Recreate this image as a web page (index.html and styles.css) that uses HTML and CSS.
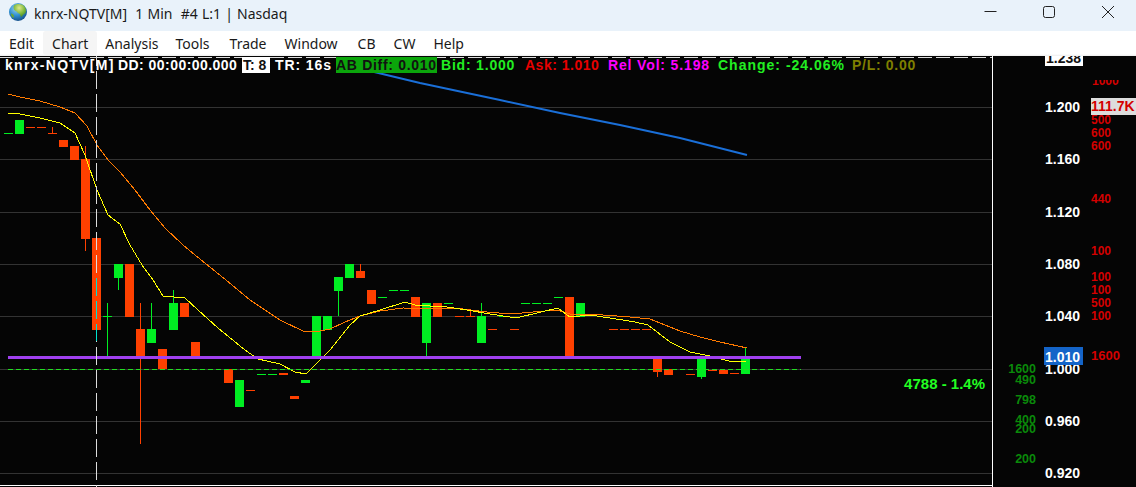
FILE: index.html
```html
<!DOCTYPE html>
<html lang="en">
<head>
    <meta charset="UTF-8">
    <meta name="viewport" content="width=device-width, initial-scale=1.0">
    <title>knrx-NQTV[M]</title>
    <link rel="stylesheet" href="styles.css">
</head>
<body>
    <div class="titlebar">
        <svg class="globe" width="18" height="18" viewBox="0 0 18 18">
            <defs>
                <radialGradient id="sea" cx="40%" cy="30%" r="80%">
                    <stop offset="0" stop-color="#9fd4ee"/>
                    <stop offset="0.5" stop-color="#2f8fd0"/>
                    <stop offset="1" stop-color="#0f3f78"/>
                </radialGradient>
                <radialGradient id="land" cx="45%" cy="30%" r="75%">
                    <stop offset="0" stop-color="#dfe88a"/>
                    <stop offset="0.6" stop-color="#7cb83a"/>
                    <stop offset="1" stop-color="#3f7f2a"/>
                </radialGradient>
            </defs>
            <circle cx="9" cy="9" r="9" fill="url(#sea)"/>
            <path d="M5 2.500C8 .5 13 .5 15.500 3.500 17.500 6 17.500 9.500 15.500 11c-1.500.5-2 2.500-3.500 3-1-1.500-.5-3-2-3.500-2-.5-1.500-2-3.500-2.500C4.500 7 4 4 5 2.500z" fill="url(#land)"/>
            <path d="M2 10.500c1.500 0 2.500 1 3 2.500l-.5 2C3 14 2 12.500 2 10.500z" fill="#6aa636"/>
        </svg>
        <span class="title">knrx-NQTV[M]  1 Min  #4 L:1 | Nasdaq</span>
        <div class="winbtns">
            <svg width="14" height="14" viewBox="0 0 14 14"><path d="M1.500 6.500H13.500" stroke="#222" fill="none"/></svg>
            <svg width="14" height="14" viewBox="0 0 14 14"><rect x="1.500" y="1.500" width="11" height="11" rx="2" stroke="#222" fill="none"/></svg>
            <svg width="14" height="14" viewBox="0 0 14 14"><path d="M1 1L13 13M13 1L1 13" stroke="#222" fill="none"/></svg>
        </div>
    </div>
    <div class="menubar">
        <span class="menu-item">Edit</span>
        <span class="menu-item active">Chart</span>
        <span class="menu-item">Analysis</span>
        <span class="menu-item">Tools</span>
        <span class="menu-item">Trade</span>
        <span class="menu-item">Window</span>
        <span class="menu-item">CB</span>
        <span class="menu-item">CW</span>
        <span class="menu-item">Help</span>
    </div>
    <div class="chart">
        <svg class="plot" width="1136" height="431" viewBox="0 56 1136 431">
            <!-- grid -->
            <g class="grid">
                <rect x="0" y="107" width="992" height="1"/>
                <rect x="0" y="159" width="992" height="1"/>
                <rect x="0" y="212" width="992" height="1"/>
                <rect x="0" y="264" width="992" height="1"/>
                <rect x="0" y="316" width="992" height="1"/>
                <rect x="0" y="369" width="992" height="1"/>
                <rect x="0" y="421" width="992" height="1"/>
                <rect x="0" y="473" width="992" height="1"/>
            </g>
            <line class="topdash" x1="0" y1="57.500" x2="992" y2="57.500"/>
            <rect class="frame" x="992" y="56" width="1" height="431"/>
            <rect class="frame" x="0" y="485" width="992" height="1"/>

            <!-- green candles -->
            <g class="up">
                <rect x="4" y="133" width="9" height="1"/>
                <rect x="15" y="120" width="9" height="14"/>
                <rect x="107" y="303" width="1" height="53"/>
                <rect x="103" y="316" width="9" height="1"/>
                <rect x="114" y="264" width="9" height="14"/>
                <rect x="118" y="278" width="1" height="12"/>
                <rect x="147" y="329" width="9" height="14"/>
                <rect x="151" y="303" width="1" height="26"/>
                <rect x="169" y="303" width="9" height="27"/>
                <rect x="173" y="290" width="1" height="13"/>
                <rect x="235" y="380" width="9" height="27"/>
                <rect x="257" y="374" width="9" height="1"/>
                <rect x="268" y="374" width="9" height="1"/>
                <rect x="301" y="380" width="9" height="3"/>
                <rect x="312" y="316" width="9" height="40"/>
                <rect x="323" y="316" width="9" height="14"/>
                <rect x="334" y="277" width="9" height="14"/>
                <rect x="338" y="291" width="1" height="25"/>
                <rect x="345" y="264" width="9" height="14"/>
                <rect x="378" y="297" width="9" height="1"/>
                <rect x="389" y="290" width="9" height="1"/>
                <rect x="400" y="290" width="9" height="1"/>
                <rect x="422" y="303" width="9" height="40"/>
                <rect x="426" y="343" width="1" height="13"/>
                <rect x="444" y="303" width="9" height="1"/>
                <rect x="477" y="316" width="9" height="27"/>
                <rect x="481" y="303" width="1" height="13"/>
                <rect x="499" y="316" width="9" height="1"/>
                <rect x="521" y="303" width="9" height="1"/>
                <rect x="532" y="303" width="9" height="1"/>
                <rect x="543" y="303" width="9" height="1"/>
                <rect x="554" y="297" width="9" height="1"/>
                <rect x="576" y="303" width="9" height="14"/>
                <rect x="697" y="358" width="9" height="19"/>
                <rect x="701" y="377" width="1" height="2"/>
                <rect x="741" y="358" width="9" height="16"/>
                <rect x="745" y="348" width="1" height="10"/>
            </g>

            <!-- red candles -->
            <g class="down">
                <rect x="26" y="127" width="9" height="1"/>
                <rect x="37" y="127" width="9" height="1"/>
                <rect x="48" y="133" width="9" height="1"/>
                <rect x="52" y="127" width="1" height="6"/>
                <rect x="59" y="140" width="9" height="7"/>
                <rect x="70" y="146" width="9" height="14"/>
                <rect x="81" y="159" width="9" height="80"/>
                <rect x="85" y="146" width="1" height="13"/>
                <rect x="85" y="239" width="1" height="12"/>
                <rect x="92" y="238" width="9" height="92"/>
                <rect x="125" y="264" width="9" height="53"/>
                <rect x="136" y="329" width="9" height="27"/>
                <rect x="140" y="303" width="1" height="141"/>
                <rect x="158" y="349" width="9" height="20"/>
                <rect x="180" y="303" width="9" height="14"/>
                <rect x="191" y="342" width="9" height="14"/>
                <rect x="224" y="369" width="9" height="14"/>
                <rect x="246" y="390" width="9" height="1"/>
                <rect x="279" y="373" width="9" height="2"/>
                <rect x="290" y="396" width="9" height="3"/>
                <rect x="356" y="271" width="9" height="7"/>
                <rect x="360" y="264" width="1" height="7"/>
                <rect x="367" y="290" width="9" height="14"/>
                <rect x="411" y="297" width="9" height="20"/>
                <rect x="433" y="303" width="9" height="14"/>
                <rect x="455" y="316" width="9" height="1"/>
                <rect x="466" y="316" width="9" height="1"/>
                <rect x="470" y="310" width="1" height="6"/>
                <rect x="488" y="329" width="9" height="1"/>
                <rect x="510" y="329" width="9" height="1"/>
                <rect x="565" y="297" width="9" height="59"/>
                <rect x="609" y="329" width="9" height="1"/>
                <rect x="620" y="329" width="9" height="1"/>
                <rect x="631" y="329" width="9" height="1"/>
                <rect x="642" y="329" width="9" height="1"/>
                <rect x="653" y="358" width="9" height="14"/>
                <rect x="657" y="372" width="1" height="5"/>
                <rect x="664" y="369" width="9" height="6"/>
                <rect x="686" y="374" width="9" height="1"/>
                <rect x="708" y="370" width="9" height="1"/>
                <rect x="719" y="370" width="9" height="4"/>
                <rect x="730" y="373" width="9" height="1"/>
            </g>

            <!-- moving averages -->
            <polyline class="ma-blue" points="370,71 420,83 500,100 560,113 620,125 680,138 747,155"/>
            <polyline class="ma-orange" points="8,94 20,97 40,101 60,107 75,113 87,126 97,145 108,160 120,172 135,190 150,210 165,228 183,245 195,255 226,280 250,300 280,320 305,332 320,331 330,329 345,322 360,316 380,311 403,308 463,309 487,312 510,314 557,310 570,314 590,314 630,317 650,319 680,331 700,337 720,342 747,348"/>
            <polyline class="ma-yellow" points="8,113 20,114 40,118 60,123 75,133 85,155 97,190 108,215 120,224 130,245 142,265 153,280 163,296 185,298 198,310 218,328 245,350 258,359 280,364 295,372 306,374 320,360 330,350 350,325 360,316 380,310 405,302 415,305 430,306 447,307 467,310 490,314 510,317 516,318 537,313 558,308 570,317 590,315 610,318 635,322 648,325 670,342 690,352 710,356 733,362 746,361"/>

            <line class="price-dash" x1="8" y1="369.500" x2="801" y2="369.500"/>
            <rect class="price-line" x="8" y="356" width="793" height="3"/>
            <line class="cursor" x1="96.500" y1="48" x2="96.500" y2="487"/>
            <line class="cursor-in" x1="96.500" y1="278" x2="96.500" y2="341"/>

            <!-- price axis -->
            <rect class="tag-white" x="1045" y="56" width="38" height="10"/>
            <text class="tag-text" x="1046" y="63">1.238</text>
            <g class="price">
                <text x="1045" y="112">1.200</text>
                <text x="1045" y="164">1.160</text>
                <text x="1045" y="217">1.120</text>
                <text x="1045" y="269">1.080</text>
                <text x="1045" y="321">1.040</text>
                <text x="1045" y="374">1.000</text>
                <text x="1045" y="426">0.960</text>
                <text x="1045" y="478">0.920</text>
            </g>
            <rect class="tag-blue" x="1044" y="347" width="39" height="18"/>
            <text class="tag-blue-text" x="1045" y="362">1.010</text>

            <g class="vol-red">
                <text x="1092" y="85">1000</text>
                <rect class="mask" x="1090" y="66" width="40" height="14"/>
                <text x="1091" y="124">500</text>
                <rect class="tag-grey" x="1091" y="98" width="45" height="17"/>
                <text class="big" x="1091" y="111">111.7K</text>
                <text x="1091" y="137">600</text>
                <text x="1091" y="150">600</text>
                <text x="1091" y="203">440</text>
                <text x="1091" y="255">100</text>
                <text x="1091" y="281">100</text>
                <text x="1091" y="294">100</text>
                <text x="1091" y="307">500</text>
                <text x="1091" y="320">100</text>
                <text class="big-thin" x="1091" y="360">1600</text>
            </g>
            <g class="vol-green">
                <text x="1036" y="373">1600</text>
                <text x="1036" y="384">490</text>
                <text x="1036" y="404">798</text>
                <text x="1036" y="424">400</text>
                <text x="1036" y="433">200</text>
                <text x="1036" y="463">200</text>
            </g>
            <text class="summary" x="985" y="389">4788 - 1.4%</text>
        </svg>

        <div class="status">
            <span class="st st-name">knrx-NQTV[M]</span>
            <span class="st st-dd">DD: 00:00:00.000</span>
            <span class="st st-t">T: 8</span>
            <span class="st st-tr">TR: 16s</span>
            <span class="st st-ab">AB Diff: 0.010</span>
            <span class="st st-bid">Bid: 1.000</span>
            <span class="st st-ask">Ask: 1.010</span>
            <span class="st st-rel">Rel Vol: 5.198</span>
            <span class="st st-chg">Change: -24.06%</span>
            <span class="st st-pl">P/L: 0.00</span>
        </div>
    </div>
</body>
</html>
```

FILE: styles.css
```css
body {
    margin: 0;
    width: 1136px;
    height: 487px;
    overflow: hidden;
    background: #050505;
    font-family: "Noto Sans", sans-serif;
}
.titlebar {
    height: 31px;
    background: #e9f2fa;
    display: flex;
    align-items: center;
    padding-left: 9px;
    color: #1a1a1a;
    font-size: 14px;
}
.globe {
    margin-right: 7px;
    margin-bottom: 7px;
}
.title {
    white-space: pre;
    word-spacing: 0.5px;
    margin-bottom: 4px;
}
.winbtns {
    margin-left: auto;
    margin-right: 21px;
    margin-bottom: 7px;
    display: flex;
    gap: 45px;
    height: 14px;
}
.menubar {
    height: 25px;
    background: linear-gradient(#fff 23px, #eee);
    display: flex;
    font-size: 14px;
    color: #1a1a1a;
}
.menu-item {
    padding: 0 9px;
    height: 24px;
    line-height: 25px;
}
.menu-item.active {
    background: #f5f5f5;
    border-radius: 3px;
}
.menu-item:nth-child(3),
.menu-item:nth-child(4) {
    margin-left: -1px;
}
.menu-item:nth-child(5),
.menu-item:nth-child(7) {
    margin-left: 2px;
}
.chart {
    position: relative;
    height: 431px;
    background: #050505;
}
.plot {
    display: block;
}

/* chart parts */
.grid rect {
    fill: #333;
}
.topdash {
    stroke: #ddd;
    stroke-dasharray: 14 4;
}
.frame {
    fill: #fff;
}
.up rect {
    fill: #00ee22;
}
.down rect {
    fill: #ff4000;
}
polyline {
    fill: none;
    shape-rendering: crispEdges;
}
.ma-blue {
    stroke: #1a6fd8;
    stroke-width: 2;
    shape-rendering: auto;
}
.ma-orange {
    stroke: #ff7a00;
}
.ma-yellow {
    stroke: #ffff00;
}
.price-dash {
    stroke: #22dd22;
    stroke-dasharray: 5 3;
}
.price-line {
    fill: #a040f0;
}
.cursor {
    stroke: #ddd;
    stroke-dasharray: 18 5;
}
.cursor-in {
    stroke: #00e0d0;
    stroke-dasharray: 18 5;
}

/* axis */
text {
    font-family: "Liberation Sans", Arial, sans-serif;
    font-weight: bold;
}
.price text {
    font-size: 14px;
    fill: #fff;
}
.tag-white {
    fill: #fff;
}
.tag-text {
    font-size: 14px;
    fill: #111;
}
.tag-blue {
    fill: #1464c8;
}
.tag-blue-text {
    font-size: 14px;
    fill: #fff;
}
.mask {
    fill: #050505;
}
.tag-grey {
    fill: #ddd;
}
.vol-red text {
    font-size: 12px;
    fill: #d40000;
}
.vol-red .big {
    font-size: 14px;
}
.vol-red .big-thin {
    font-size: 13px;
}
.vol-green text {
    font-size: 12.500px;
    fill: #0a8a0a;
    text-anchor: end;
}
.summary {
    font-size: 15px;
    fill: #22ff22;
    text-anchor: end;
}

/* status row */
.status {
    position: absolute;
    top: 0;
    left: 5px;
    display: flex;
    height: 19px;
    white-space: nowrap;
    font-family: "Liberation Sans", Arial, sans-serif;
    font-size: 14px;
    font-weight: bold;
    padding-top: 1px;
    color: #fff;
}
.st {
    height: 16px;
    line-height: 17px;
}
.st-name {
    width: 113px;
    letter-spacing: 1.3px;
}
.st-dd {
    width: 124px;
    letter-spacing: 0.45px;
}
.st-t {
    width: 28px;
    padding-left: 1px;
    margin-right: 5px;
    background: #fff;
    color: #111;
    box-sizing: border-box;
}
.st-tr {
    width: 61px;
    letter-spacing: 0.9px;
}
.st-ab {
    width: 101px;
    margin-right: 4px;
    background: #0ba50b;
    color: #111;
    letter-spacing: 0.7px;
}
.st-bid {
    width: 84px;
    color: #22ee22;
    letter-spacing: 0.8px;
}
.st-ask {
    width: 83px;
    color: #e80000;
    letter-spacing: 0.5px;
}
.st-rel {
    width: 110px;
    color: #ff00ff;
    letter-spacing: 0.85px;
}
.st-chg {
    width: 134px;
    color: #22ee22;
    letter-spacing: 1px;
}
.st-pl {
    color: #7f7f00;
    letter-spacing: 0.7px;
}
```
